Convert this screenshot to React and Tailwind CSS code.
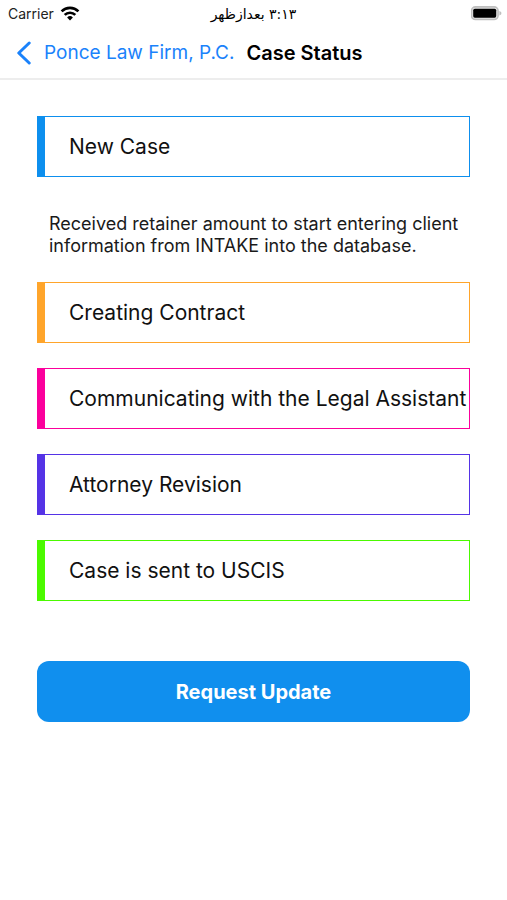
const steps = [
  {
    title: 'New Case',
    color: 'border-[#0d8fee]',
    description:
      'Received retainer amount to start entering client information from INTAKE into the database.',
  },
  { title: 'Creating Contract', color: 'border-[#ffa52b]' },
  { title: 'Communicating with the Legal Assistant', color: 'border-[#fb009c]' },
  { title: 'Attorney Revision', color: 'border-[#5533e6]' },
  { title: 'Case is sent to USCIS', color: 'border-[#4bfa00]' },
];

const WifiIcon = () => (
  <svg className="w-5 h-4" viewBox="0 0 20 16" fill="none" stroke="#000" strokeWidth="2.7" aria-hidden="true">
    <path d="M1.6 5.4a12 12 0 0 1 16.8 0" />
    <path d="M4.7 8.9a7.6 7.6 0 0 1 10.6 0" />
    <path d="M10 14.4l-2.9-2.9a4.1 4.1 0 0 1 5.8 0z" fill="#000" stroke="none" />
  </svg>
);

const BatteryIcon = () => (
  <svg className="w-8 h-4" viewBox="0 0 32 16" aria-hidden="true">
    <rect x="0.5" y="0.9" width="26.6" height="12.6" rx="4" fill="#e4e4e4" stroke="#bfbfbf" strokeWidth="1.6" />
    <rect x="2.2" y="2.7" width="23" height="9" rx="1.6" fill="#000" />
    <path d="M28.4 4.9c1.4.5 2 1.3 2 2.3s-.6 1.8-2 2.3z" fill="#bfbfbf" />
  </svg>
);

const StatusBar = () => (
  <div className="grid grid-cols-3 items-center h-7 px-1 text-sm text-[#222]">
    <div className="flex items-center gap-1.5 pl-1">
      <span>Carrier</span>
      <WifiIcon />
    </div>
    <span dir="rtl" lang="fa" className="text-center font-['DejaVu_Sans',sans-serif] text-sm text-black whitespace-nowrap">
      ۳:۱۳ بعدازظهر
    </span>
    <div className="flex justify-end">
      <BatteryIcon />
    </div>
  </div>
);

const Step = ({ title, color, description }) => (
  <li>
    <h2 className={`flex items-center h-[61px] border border-l-8 pl-6 text-[21px] whitespace-nowrap ${color}`}>
      {title}
    </h2>
    {description && (
      <p className="mt-9 pl-3 pr-2 text-lg leading-[22px] text-[#1a1a1a]">{description}</p>
    )}
  </li>
);

const App = () => {
  return (
    <div className="min-h-screen bg-white font-['Inter',sans-serif] text-[#111]">
      <header className="border-b-2 border-[#ededed]">
        <StatusBar />
        <nav className="flex items-center gap-3 h-[50px] px-4">
          <a href="#firm" className="flex items-center gap-3 text-[19px] text-[#1a82fb]">
            <svg className="w-4 h-6" viewBox="0 0 16 24" fill="none" stroke="currentColor" strokeWidth="3" strokeLinecap="round" strokeLinejoin="round" aria-hidden="true">
              <path d="M13.2 2L2.8 12l10.4 10" />
            </svg>
            Ponce Law Firm, P.C.
          </a>
          <h1 className="text-xl font-semibold text-black">Case Status</h1>
        </nav>
      </header>

      <main className="px-[37px] pt-9">
        <ul className="flex flex-col gap-[25px]">
          {steps.map((step) => (
            <Step key={step.title} {...step} />
          ))}
        </ul>

        <button type="button" className="w-full h-[61px] mt-[60px] rounded-xl bg-[#108fee] text-xl font-bold text-white">
          Request Update
        </button>
      </main>
    </div>
  );
};

export default App;
